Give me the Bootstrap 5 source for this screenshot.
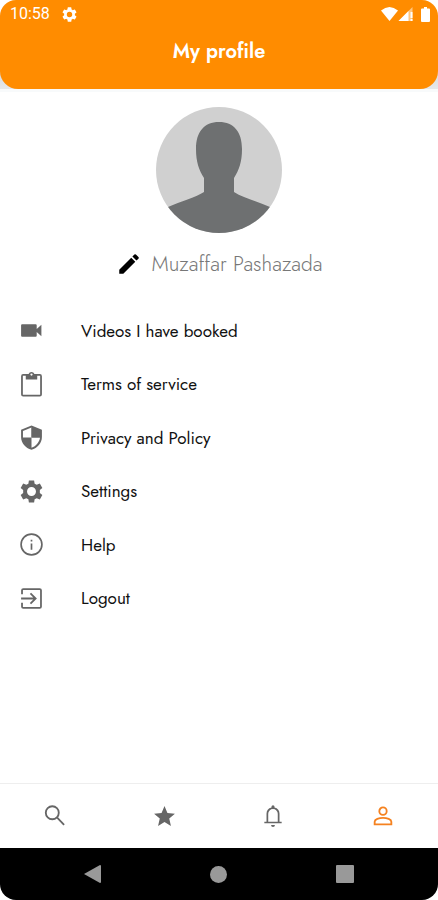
<!DOCTYPE html>
<html lang="en">
<head>
<meta charset="utf-8">
<meta name="viewport" content="width=device-width, initial-scale=1">
<title>My profile</title>
<link href="https://cdn.jsdelivr.net/npm/bootstrap@5.3.0/dist/css/bootstrap.min.css" rel="stylesheet">
<style>
body { font-family: Jost, Futura, Lato, sans-serif; color: #111; background: #fff; }
svg { display: block; fill: currentColor; }
.screen { border-radius: 16px; overflow: hidden; }
.header-wrap { background: linear-gradient(#fff 0 60px, #d0d2d5 60px, #e6e8ea); border-bottom: 3px solid #f8fafb; }
.app-header { background: #ff8c00; border-radius: 0 0 18px 18px; height: 89px; }
.status { font: 16px/28px Roboto, sans-serif; padding: 0 8px 0 10px; }
.title { font-size: 20px; line-height: 24px; font-weight: 600; margin-top: 12px; }
.avatar { width: 126px; height: 126px; margin-top: 15px; }
.user-name { font-size: 21px; line-height: 24px; font-weight: 300; color: #777; }
.name-row { margin-top: 18px; gap: 10px; }
.edit { color: #000; }
.menu { height: 321px; margin-top: 27px; }
.menu a { color: #111; font-size: 17px; line-height: 24px; padding-left: 19px; gap: 37px; }
.menu svg, .tabs svg { color: #666; }
.tabs { border-top: 1px solid #eee; height: 65px; }
.tabs .active svg { color: #f58220; }
.system-bar { background: #000; height: 52px; padding: 0 29px; }
</style>
<script src="https://cdn.jsdelivr.net/npm/bootstrap@5.3.0/dist/js/bootstrap.bundle.min.js"></script>
</head>
<body>
<div class="screen d-flex flex-column min-vh-100">
  <div class="header-wrap">
    <header class="app-header text-white">
      <div class="status d-flex align-items-center justify-content-between">
        <div class="d-flex align-items-center gap-2">
          <span>10:58</span>
          <svg class="ms-1" width="15" height="15" viewBox="2 2 20 20" aria-hidden="true"><path d="M19.14 12.94c.04-.3.06-.61.06-.94s-.02-.64-.07-.94l2.03-1.58a.5.5 0 0 0 .12-.61l-1.92-3.32a.49.49 0 0 0-.59-.22l-2.39.96a7 7 0 0 0-1.62-.94l-.36-2.54a.48.48 0 0 0-.48-.41h-3.84a.47.47 0 0 0-.47.41l-.36 2.54c-.59.24-1.13.57-1.62.94l-2.39-.96a.47.47 0 0 0-.59.22L2.74 8.87a.47.47 0 0 0 .12.61l2.03 1.58a6 6 0 0 0 0 1.88l-2.03 1.58a.5.5 0 0 0-.12.61l1.92 3.32c.12.22.37.29.59.22l2.39-.96c.5.38 1.03.7 1.62.94l.36 2.54c.05.24.24.41.48.41h3.84c.24 0 .44-.17.47-.41l.36-2.54a7 7 0 0 0 1.62-.94l2.39.96c.22.08.47 0 .59-.22l1.92-3.32a.47.47 0 0 0-.12-.61zM12 15.6a3.6 3.6 0 1 1 0-7.2 3.6 3.6 0 0 1 0 7.2z"/></svg>
        </div>
        <div class="d-flex align-items-center">
          <svg width="17" height="14" viewBox="0 0 17 14" aria-hidden="true"><path d="M8.500 14 0 3.500Q8.500-3.500 17 3.500z"/></svg>
          <svg width="15" height="14" viewBox="0 0 14 14" aria-hidden="true"><path d="M14 0v14H0z" opacity=".5"/><path d="M10 4v10H0zM12 5h2v6h-2zM12 12h2v2h-2z"/></svg>
          <svg class="ms-2" width="9" height="15" viewBox="0 0 9 15" aria-hidden="true"><path d="M3 0h3v1.500h2q1 0 1 1V14q0 1-1 1H1q-1 0-1-1V2.500q0-1 1-1h2z"/></svg>
        </div>
      </div>
      <h1 class="title text-center mb-0">My profile</h1>
    </header>
  </div>

  <main class="flex-grow-1">
    <svg class="avatar mx-auto" viewBox="0 0 126 126" role="img" aria-label="Profile photo">
      <defs><clipPath id="round"><circle cx="63" cy="63" r="63"/></clipPath></defs>
      <g clip-path="url(#round)"><path fill="#d0d0d0" d="M0 0h126v126H0z"/><path fill="#6e7071" d="M63 15c15 0 23 10 23 27 0 13-3 21-8 29v14c9 6 23 9 36 15l12 7v19H0v-19l12-7c13-6 27-9 36-15V71c-5-8-8-16-8-29 0-17 8-27 23-27z"/></g>
    </svg>
    <div class="name-row d-flex justify-content-center align-items-center">
      <button type="button" class="edit btn p-0 border-0" aria-label="Edit name"><svg width="26" height="26" viewBox="0 0 24 24"><path d="M3 17.250V21h3.750L17.810 9.940l-3.750-3.750zM20.710 7.040a1 1 0 0 0 0-1.410l-2.340-2.340a1 1 0 0 0-1.410 0l-1.830 1.830 3.750 3.750z"/></svg></button>
      <span class="user-name">Muzaffar Pashazada</span>
    </div>

    <nav class="menu d-flex flex-column" aria-label="Profile menu">
      <a href="#" class="d-flex flex-fill align-items-center text-decoration-none"><svg width="25" height="25" viewBox="0 0 24 24"><path d="M17 10.500V7a1 1 0 0 0-1-1H3a1 1 0 0 0-1 1v10a1 1 0 0 0 1 1h13a1 1 0 0 0 1-1v-3.500l4.500 4v-11z"/></svg>Videos I have booked</a>
      <a href="#" class="d-flex flex-fill align-items-center text-decoration-none"><svg width="25" height="25" viewBox="0 0 24 24"><path fill-rule="evenodd" d="M20 2h-5.200a3 3 0 0 0-5.600 0H4a2 2 0 0 0-2 2v17.500a2 2 0 0 0 2 2h16a2 2 0 0 0 2-2V4a2 2 0 0 0-2-2zm-8-.6a1.100 1.100 0 1 1 0 2.200 1.100 1.100 0 0 1 0-2.200zm8.300 20.400H3.700V3.700H6.500v3.500h11V3.700h2.800z"/></svg>Terms of service</a>
      <a href="#" class="d-flex flex-fill align-items-center text-decoration-none"><svg width="25" height="25" viewBox="0 0 24 24"><path fill-rule="evenodd" d="M12 .5 2 4.500v7c0 5.700 4.200 10.700 10 12.300 5.800-1.600 10-6.600 10-12.300v-7zM12 2.400V12h8.200c-.6 4.400-3.800 8.300-8.200 9.900V12H3.800V5.700z"/><path d="M12 2.400 20.200 5.700V12H12z"/></svg>Privacy and Policy</a>
      <a href="#" class="d-flex flex-fill align-items-center text-decoration-none"><svg width="25" height="25" viewBox="0 0 24 24"><path fill-rule="evenodd" d="M9.500 1.500h5l.5 3 2 1.100 3-1.200 2.400 4.200-2.400 1.900v3l2.400 1.900-2.400 4.200-3-1.200-2 1.100-.5 3h-5l-.5-3-2-1.100-3 1.200-2.400-4.200L4 13.500v-3L1.600 8.600 4 4.400l3 1.200 2-1.100zM12 7.700a4.300 4.300 0 1 0 0 8.600 4.300 4.300 0 0 0 0-8.600z"/></svg>Settings</a>
      <a href="#" class="d-flex flex-fill align-items-center text-decoration-none"><svg width="25" height="25" viewBox="0 0 24 24"><circle cx="12" cy="12" r="10" fill="none" stroke="currentColor" stroke-width="1.600"/><path d="M11.200 11h1.600v6h-1.600zM11.200 7.500h1.600V9h-1.600z"/></svg>Help</a>
      <a href="#" class="d-flex flex-fill align-items-center text-decoration-none"><svg width="25" height="25" viewBox="0 0 24 24"><g fill="none" stroke="currentColor" stroke-width="1.700"><path d="M2.900 8V4.100Q2.900 2.900 4.100 2.900h15.800q1.200 0 1.200 1.200v15.800q0 1.200-1.200 1.200H4.100q-1.200 0-1.200-1.200V16M2 12h13.500M11 7l5 5-5 5"/></g></svg>Logout</a>
    </nav>
  </main>

  <nav class="tabs d-flex" aria-label="Main">
    <a href="#" class="flex-fill d-flex align-items-center justify-content-center" aria-label="Search"><svg width="26" height="26" viewBox="0 0 24 24"><g fill="none" stroke="currentColor" stroke-width="1.700"><circle cx="9.500" cy="9" r="6"/><path d="m13.800 13.300 6.600 6.800"/></g></svg></a>
    <a href="#" class="flex-fill d-flex align-items-center justify-content-center" aria-label="Favourites"><svg width="25" height="25" viewBox="0 0 24 24"><path d="M12 17.270 18.180 21l-1.640-7.030L22 9.240l-7.190-.61L12 2 9.190 8.630 2 9.240l5.460 4.730L5.820 21z"/></svg></a>
    <a href="#" class="flex-fill d-flex align-items-center justify-content-center" aria-label="Notifications"><svg width="26" height="26" viewBox="0 0 24 24"><path d="M10.200 20.300h3.600a1.800 1.800 0 0 1-3.600 0zM4 17.300h2V10a6 6 0 0 1 4.600-5.800V3.500a1.400 1.400 0 0 1 2.800 0v.7A6 6 0 0 1 18 10v7.300h2v1.500H4zm3.600 0h8.800V10a4.400 4.400 0 0 0-8.800 0z"/></svg></a>
    <a href="#" class="active flex-fill d-flex align-items-center justify-content-center" aria-label="Profile" aria-current="page"><svg width="26" height="26" viewBox="0 0 24 24"><g fill="none" stroke="currentColor" stroke-width="1.700"><circle cx="12" cy="7.500" r="3.400"/><path d="M4.300 19.700v-2.500c0-2.200 4-3.500 7.700-3.500s7.700 1.300 7.700 3.500v2.500z"/></g></svg></a>
  </nav>
  <div class="system-bar d-flex">
    <button type="button" class="btn p-0 border-0 flex-fill d-flex align-items-center justify-content-center" aria-label="Back"><svg width="17" height="18" viewBox="0 0 17 18"><path fill="#999" d="M16 0q1 0 1 1v16q0 1-1 1L0 9z"/></svg></button>
    <button type="button" class="btn p-0 border-0 flex-fill d-flex align-items-center justify-content-center" aria-label="Home"><svg width="17" height="17" viewBox="0 0 17 17"><circle fill="#999" cx="8.500" cy="8.500" r="8.500"/></svg></button>
    <button type="button" class="btn p-0 border-0 flex-fill d-flex align-items-center justify-content-center" aria-label="Recent apps"><svg width="18" height="18" viewBox="0 0 18 18"><rect fill="#999" width="18" height="18" rx="1"/></svg></button>
  </div>
</div>
</body>
</html>
